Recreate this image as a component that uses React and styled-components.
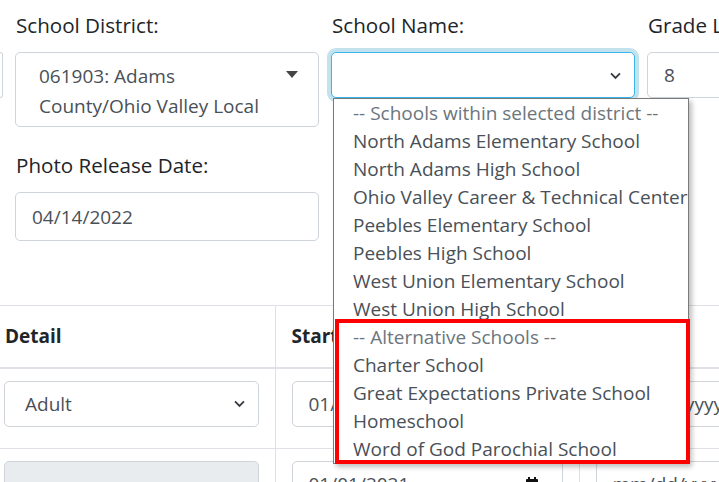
import React from 'react'
import styled, { createGlobalStyle } from 'styled-components'

const GlobalStyle = createGlobalStyle`
  html, body {
    margin: 0;
    overflow: hidden;
    background: #fff;
  }
  body {
    font-family: "Open Sans", "Noto Sans", sans-serif;
    font-size: 19px;
    color: #212529;
  }
`

const districtSchools = [
  'North Adams Elementary School',
  'North Adams High School',
  'Ohio Valley Career & Technical Center',
  'Peebles Elementary School',
  'Peebles High School',
  'West Union Elementary School',
  'West Union High School',
]

const altSchools = [
  'Charter School',
  'Great Expectations Private School',
  'Homeschool',
  'Word of God Parochial School',
]

function Chevron() {
  return (
    <ChevronIcon viewBox="0 0 16 16">
      <path d="M2.5 5.5l5.5 5.5 5.5-5.5" fill="none" stroke="#343a40" strokeWidth="2.2" />
    </ChevronIcon>
  )
}

function Caret() {
  return (
    <CaretIcon viewBox="0 0 12 7">
      <path d="M0 0h12L6 7z" fill="#444" />
    </CaretIcon>
  )
}

function Calendar() {
  return (
    <CalendarIcon viewBox="0 0 12 13">
      <rect x="2" y="0" width="2" height="3" fill="#111" />
      <rect x="8" y="0" width="2" height="3" fill="#111" />
      <rect x="0" y="2" width="12" height="11" rx="1" fill="#111" />
      <rect x="1.5" y="5" width="9" height="6.5" fill="#fff" />
    </CalendarIcon>
  )
}

export default function App() {
  return (
    <>
      <GlobalStyle />
      <Page>
        <FormGrid>
          <Field>
            <Label>&nbsp;</Label>
            <Sliver />
          </Field>
          <Field>
            <Label>School District:</Label>
            <Control $tall>
              <span>061903: Adams County/Ohio Valley Local</span>
              <Caret />
            </Control>
          </Field>
          <Field>
            <Label>School Name:</Label>
            <ControlWrap>
              <Control $focused>
                <span />
                <Chevron />
              </Control>
              <Dropdown>
                <Option $group>-- Schools within selected district --</Option>
                {districtSchools.map((s) => (
                  <Option key={s}>{s}</Option>
                ))}
                <Highlight>
                  <Option $group>-- Alternative Schools --</Option>
                  {altSchools.map((s) => (
                    <Option key={s}>{s}</Option>
                  ))}
                </Highlight>
              </Dropdown>
            </ControlWrap>
          </Field>
          <Field>
            <Label>Grade Level:</Label>
            <Control>
              <span>8</span>
            </Control>
          </Field>

          <Field $col={2}>
            <Label>Photo Release Date:</Label>
            <Control $h={49} $pad={16}>
              <span>04/14/2022</span>
            </Control>
          </Field>
        </FormGrid>

        <Table>
          <colgroup>
            <col style={{ width: 275 }} />
            <col style={{ width: 304 }} />
            <col style={{ width: 304 }} />
          </colgroup>
          <thead>
            <tr>
              <Th $first>Detail</Th>
              <Th>Start Date</Th>
              <Th>End Date</Th>
            </tr>
          </thead>
          <tbody>
            <tr>
              <Td $first>
                <Control $pad={20}>
                  <span>Adult</span>
                  <Chevron />
                </Control>
              </Td>
              <Td>
                <Control>
                  <span>01/01/2021</span>
                  <Calendar />
                </Control>
              </Td>
              <Td>
                <Control>
                  <span>mm/dd/yyyy</span>
                </Control>
              </Td>
            </tr>
            <tr>
              <Td $first>
                <Control $disabled>
                  <span />
                </Control>
              </Td>
              <Td>
                <Control>
                  <span>01/01/2021</span>
                  <Calendar />
                </Control>
              </Td>
              <Td>
                <Control>
                  <span>mm/dd/yyyy</span>
                </Control>
              </Td>
            </tr>
          </tbody>
        </Table>
      </Page>
    </>
  )
}

const Page = styled.div`
  padding-top: 10px;
  width: 900px;
`

const FormGrid = styled.div`
  display: grid;
  grid-template-columns: 3px 304px 304px 260px;
  column-gap: 12px;
  row-gap: 23px;
`

const Field = styled.div`
  display: flex;
  flex-direction: column;
  gap: 12px;
  ${(p) => p.$col && `grid-column: ${p.$col};`}
`

const Label = styled.div`
  font-size: 20.6px;
  line-height: 30px;
  white-space: nowrap;
  padding-left: 1px;
`

const Sliver = styled.div`
  height: 44px;
  border: 1px solid #ced4da;
  border-left: none;
  border-radius: 0 5px 5px 0;
`

const ControlWrap = styled.div`
  position: relative;
`

const Control = styled.div`
  box-sizing: border-box;
  display: flex;
  align-items: ${(p) => (p.$tall ? 'flex-start' : 'center')};
  justify-content: space-between;
  gap: 12px;
  min-height: ${(p) => p.$h || 46}px;
  padding: ${(p) => (p.$tall ? '8px 16px 5px 23px' : `0 12px 0 ${p.$pad || 16}px`)};
  line-height: 30px;
  color: #495057;
  background: ${(p) => (p.$disabled ? '#e9ecef' : '#fff')};
  border: 1px solid ${(p) => (p.$focused ? '#3bb5ee' : '#ced4da')};
  border-radius: 5px;
  box-shadow: ${(p) => (p.$focused ? '0 0 0 4px rgba(120, 190, 215, 0.45)' : 'none')};
  white-space: ${(p) => (p.$tall ? 'normal' : 'nowrap')};
  overflow: hidden;
`

const ChevronIcon = styled.svg`
  width: 13px;
  height: 13px;
  flex: none;
`

const CaretIcon = styled.svg`
  width: 12px;
  height: 7px;
  flex: none;
  margin-top: 10px;
  margin-right: 4px;
`

const CalendarIcon = styled.svg`
  width: 12px;
  height: 13px;
  flex: none;
  margin-right: 12px;
`

const Dropdown = styled.div`
  position: absolute;
  top: 100%;
  left: 2px;
  width: 356px;
  box-sizing: border-box;
  background: #fff;
  border: 1px solid #7a7a7a;
  box-shadow: 3px 3px 5px rgba(0, 0, 0, 0.25);
  z-index: 10;
`

const Option = styled.div`
  height: 28px;
  line-height: 28px;
  padding-left: 19px;
  white-space: nowrap;
  color: ${(p) => (p.$group ? '#6c757d' : '#495057')};
`

const Highlight = styled.div`
  position: relative;
  &::after {
    content: '';
    position: absolute;
    top: -4px;
    left: 1px;
    right: -2px;
    bottom: -1px;
    border: 4px solid #ff0000;
    pointer-events: none;
  }
`

const Table = styled.table`
  margin-top: 64px;
  border-collapse: collapse;
  table-layout: fixed;
  width: 883px;
`

const Th = styled.th`
  height: 62px;
  box-sizing: border-box;
  text-align: left;
  font-weight: 700;
  color: #212529;
  padding: 0 16px 0 ${(p) => (p.$first ? '5px' : '16px')};
  border-top: 1px solid #dee2e6;
  border-bottom: 2px solid #dee2e6;
  border-left: ${(p) => (p.$first ? 'none' : '1px solid #dee2e6')};
  white-space: nowrap;
`

const Td = styled.td`
  padding: 12px 16px 21px ${(p) => (p.$first ? '4px' : '16px')};
  border-bottom: 1px solid #dee2e6;
  border-left: ${(p) => (p.$first ? 'none' : '1px solid #dee2e6')};
`
